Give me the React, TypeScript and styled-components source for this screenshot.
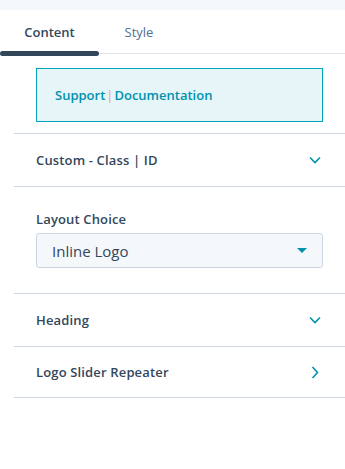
import { FC } from 'react';
import styled, { createGlobalStyle } from 'styled-components';

const GlobalStyle = createGlobalStyle`
  html, body {
    margin: 0;
    padding: 0;
    background: #ffffff;
  }
  body {
    font-family: 'Open Sans', Lato, sans-serif;
    color: #33475b;
  }
`;

const StyledPanel = styled.div`
  width: 345px;
  height: 469px;
  background: #ffffff;
  overflow: hidden;
`;

const TopStrip = styled.div`
  height: 10px;
  background: #f5f8fa;
`;

const TabBar = styled.div`
  display: flex;
  height: 43px;
  border-bottom: 1px solid #dfe3eb;
`;

const Tab = styled.div<{ $active?: boolean }>`
  position: relative;
  width: ${(p) => (p.$active ? '99px' : '80px')};
  display: flex;
  justify-content: center;
  align-items: flex-start;
  padding-top: 13px;
  box-sizing: border-box;
  font-size: 13px;
  font-weight: ${(p) => (p.$active ? 600 : 400)};
  color: ${(p) => (p.$active ? '#33475b' : '#516f90')};

  &::after {
    content: '';
    display: ${(p) => (p.$active ? 'block' : 'none')};
    position: absolute;
    left: 0;
    right: 0;
    bottom: -3px;
    height: 5px;
    border-radius: 3px;
    background: #33475b;
  }
`;

const Body = styled.div`
  padding: 14px 0 0 14px;
`;

const Notice = styled.div`
  margin: 0 22px;
  height: 54px;
  box-sizing: border-box;
  border: 1px solid #00a4bd;
  background: #e5f5f8;
  display: flex;
  align-items: center;
  padding-left: 18px;
  font-size: 13px;
  font-weight: 600;
  color: #0091ae;

  span {
    color: #e5a670;
    font-weight: 400;
    margin: 0 1px;
  }
`;

const Section = styled.div<{ $tall?: boolean }>`
  border-top: 1px solid #cbd6e2;
  margin-top: ${(p) => (p.$tall ? '11px' : '0')};
`;

const Header = styled.div<{ $compact?: boolean }>`
  height: ${(p) => (p.$compact ? '50px' : '52px')};
  display: flex;
  align-items: center;
  justify-content: space-between;
  padding: 0 ${(p) => (p.$compact ? '26px' : '24px')} 0 22px;
  font-size: 13px;
  font-weight: 600;
  letter-spacing: 0.15px;
  color: #33475b;
`;

const Field = styled.div`
  padding: 23px 22px 25px 22px;
`;

const Label = styled.div`
  font-size: 13px;
  font-weight: 600;
  letter-spacing: 0.15px;
  color: #33475b;
  margin-bottom: 5px;
`;

const Select = styled.div`
  height: 35px;
  box-sizing: border-box;
  border: 1px solid #cbd6e2;
  border-radius: 3px;
  background: #f5f8fa;
  display: flex;
  align-items: center;
  justify-content: space-between;
  padding: 0 15px;
  font-size: 15px;
  color: #33475b;
`;

const Caret = styled.div`
  width: 0;
  height: 0;
  border-left: 5px solid transparent;
  border-right: 5px solid transparent;
  border-top: 5px solid #0091ae;
`;

const ChevronDown: FC = () => (
  <svg width="12" height="8" viewBox="0 0 12 8">
    <path d="M1 1.5 L6 6.5 L11 1.5" fill="none" stroke="#0091ae" strokeWidth="1.6" />
  </svg>
);

const ChevronRight: FC = () => (
  <svg width="8" height="13" viewBox="0 0 8 13">
    <path d="M1.5 1 L6.5 6.5 L1.5 12" fill="none" stroke="#0091ae" strokeWidth="1.6" />
  </svg>
);

const App: FC = () => (
  <StyledPanel>
    <GlobalStyle />
    <TopStrip />
    <TabBar>
      <Tab $active>Content</Tab>
      <Tab>Style</Tab>
    </TabBar>
    <Body>
      <Notice>
        Support<span>|</span>Documentation
      </Notice>
      <Section $tall>
        <Header>
          Custom - Class | ID
          <ChevronDown />
        </Header>
      </Section>
      <Section>
        <Field>
          <Label>Layout Choice</Label>
          <Select>
            Inline Logo
            <Caret />
          </Select>
        </Field>
      </Section>
      <Section>
        <Header>
          Heading
          <ChevronDown />
        </Header>
      </Section>
      <Section>
        <Header $compact>
          Logo Slider Repeater
          <ChevronRight />
        </Header>
      </Section>
      <Section />
    </Body>
  </StyledPanel>
);

export default App;
